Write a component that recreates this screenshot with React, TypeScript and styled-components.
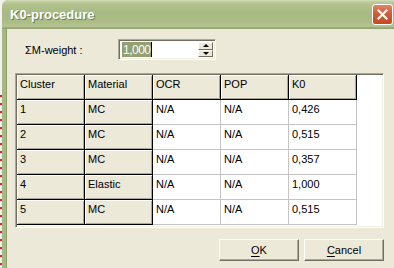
import React from 'react';
import styled, { createGlobalStyle } from 'styled-components';

const Colors = {
  face: '#ECE9D8',
  shadow: '#ACA899',
  darkShadow: '#716F64',
  light: '#F1EFE2',
  white: '#FFFFFF',
  gridLine: '#C4C4C4',
  select: '#93A070',
  frame: '#A7B883',
};

const GlobalStyle = createGlobalStyle`
  html, body {
    margin: 0;
    padding: 0;
    width: 394px;
    height: 268px;
    overflow: hidden;
    background: #EEEEEA;
  }
  * {
    box-sizing: border-box;
  }
`;

const rows = [
  { cluster: '1', material: 'MC', ocr: 'N/A', pop: 'N/A', k0: '0,426' },
  { cluster: '2', material: 'MC', ocr: 'N/A', pop: 'N/A', k0: '0,515' },
  { cluster: '3', material: 'MC', ocr: 'N/A', pop: 'N/A', k0: '0,357' },
  { cluster: '4', material: 'Elastic', ocr: 'N/A', pop: 'N/A', k0: '1,000' },
  { cluster: '5', material: 'MC', ocr: 'N/A', pop: 'N/A', k0: '0,515' },
];

const headers = ['Cluster', 'Material', 'OCR', 'POP', 'K0'];

const App = () => {
  return (
    <>
      <GlobalStyle />
      <Screen>
        <DesktopStrip />
        <Window>
          <TitleBar>
            <Title>K0-procedure</Title>
            <CloseButton>
              <svg width="11" height="11" viewBox="0 0 11 11">
                <path d="M1.5 1.5 L9.5 9.5 M9.5 1.5 L1.5 9.5" stroke="#fff" strokeWidth="2.2" strokeLinecap="square" />
              </svg>
            </CloseButton>
          </TitleBar>
          <Body>
            <WeightRow>
              <Label>ΣM-weight :</Label>
              <SpinEdit>
                <SpinText>
                  <Selected>1,000</Selected>
                  <Caret />
                </SpinText>
                <SpinButtons>
                  <SpinHalf>
                    <Arrow $up />
                  </SpinHalf>
                  <SpinHalf>
                    <Arrow />
                  </SpinHalf>
                </SpinButtons>
              </SpinEdit>
            </WeightRow>

            <GridFrame>
              <Grid>
                {headers.map((h) => (
                  <Cell key={h} $fixed>
                    {h}
                  </Cell>
                ))}
                {rows.map((r) => (
                  <React.Fragment key={r.cluster}>
                    <Cell $fixed>{r.cluster}</Cell>
                    <Cell $fixed>{r.material}</Cell>
                    <Cell>{r.ocr}</Cell>
                    <Cell>{r.pop}</Cell>
                    <Cell>{r.k0}</Cell>
                  </React.Fragment>
                ))}
              </Grid>
            </GridFrame>

            <ButtonRow>
              <DialogButton>
                <u>O</u>K
              </DialogButton>
              <DialogButton>
                <u>C</u>ancel
              </DialogButton>
            </ButtonRow>
          </Body>
        </Window>
      </Screen>
    </>
  );
};

const Screen = styled.div`
  display: flex;
  width: 394px;
  height: 268px;
  overflow: hidden;
  font-family: 'Liberation Sans', Arial, sans-serif;
  font-size: 11px;
  color: #000;
`;

const DesktopStrip = styled.div`
  width: 2px;
  flex-shrink: 0;
  background: repeating-linear-gradient(to bottom, #e02020 0, #e02020 2px, #f4f4f0 2px, #f4f4f0 8px) 0 95px / 2px 100% no-repeat,
    #f2f2ee;
`;

const Window = styled.div`
  flex: 1;
  display: flex;
  flex-direction: column;
  border-left: 4px solid ${Colors.frame};
  box-shadow: inset 1px 0 0 #8E9D6B;
  border-top-left-radius: 7px;
  background: ${Colors.face};
`;

const TitleBar = styled.div`
  height: 29px;
  display: flex;
  align-items: center;
  justify-content: space-between;
  padding: 0 1px 0 4px;
  margin-left: -4px;
  border-top-left-radius: 7px;
  background: linear-gradient(
    to bottom,
    #D6DFBD 0px,
    #BCCA98 2px,
    #AEBF8A 6px,
    #A8BA83 14px,
    #ABBC86 22px,
    #B6C592 26px,
    #98A973 28px,
    #8E9D6B 29px
  );
`;

const Title = styled.div`
  font-family: 'Liberation Sans', Arial, sans-serif;
  font-weight: bold;
  font-size: 13px;
  color: #fff;
  text-shadow: 1px 1px 0 #6E7E4A;
  padding-left: 4px;
`;

const CloseButton = styled.div`
  width: 21px;
  height: 21px;
  display: flex;
  align-items: center;
  justify-content: center;
  border: 1px solid #fff;
  border-radius: 3px;
  background: linear-gradient(to bottom, #E48564 0%, #D35A36 45%, #C44A26 100%);
`;

const Body = styled.div`
  flex: 1;
  display: flex;
  flex-direction: column;
  padding: 10px 10px 0 9px;
`;

const WeightRow = styled.div`
  display: flex;
  align-items: center;
  height: 21px;
`;

const Label = styled.div`
  width: 103px;
  padding-left: 10px;
`;

const SpinEdit = styled.div`
  width: 98px;
  height: 21px;
  display: flex;
  background: #fff;
  border-top: 1px solid ${Colors.shadow};
  border-left: 1px solid ${Colors.shadow};
  border-right: 1px solid ${Colors.white};
  border-bottom: 1px solid ${Colors.white};
  box-shadow: inset 1px 1px 0 ${Colors.darkShadow}, inset -1px -1px 0 ${Colors.light};
  padding: 2px 2px 2px 2px;
`;

const SpinText = styled.div`
  flex: 1;
  display: flex;
  align-items: stretch;
  padding-left: 1px;
`;

const Selected = styled.span`
  display: flex;
  align-items: center;
  background: ${Colors.select};
  color: #fff;
  font-size: 12px;
  letter-spacing: -0.5px;
  padding: 0 1px 0 1px;
`;

const Caret = styled.span`
  width: 1px;
  background: #000;
  margin-left: -1px;
`;

const SpinButtons = styled.div`
  width: 15px;
  display: flex;
  flex-direction: column;
`;

const SpinHalf = styled.div`
  flex: 1;
  display: flex;
  align-items: center;
  justify-content: center;
  background: ${Colors.face};
  border-top: 1px solid ${Colors.white};
  border-left: 1px solid ${Colors.white};
  border-right: 1px solid ${Colors.darkShadow};
  border-bottom: 1px solid ${Colors.darkShadow};
`;

const Arrow = styled.div<{ $up?: boolean }>`
  width: 0;
  height: 0;
  border-left: 3px solid transparent;
  border-right: 3px solid transparent;
  ${(p) => (p.$up ? 'border-bottom: 3px solid #000;' : 'border-top: 3px solid #000;')}
`;

const GridFrame = styled.div`
  margin-top: 13px;
  width: 369px;
  height: 155px;
  background: #fff;
  border-top: 1px solid ${Colors.shadow};
  border-left: 1px solid ${Colors.shadow};
  border-right: 1px solid ${Colors.white};
  border-bottom: 1px solid ${Colors.white};
  box-shadow: inset 1px 1px 0 ${Colors.darkShadow}, inset -1px -1px 0 ${Colors.light};
  padding: 1px;
`;

const Grid = styled.div`
  display: grid;
  grid-template-columns: repeat(5, 68px);
  grid-auto-rows: 25px;
`;

const Cell = styled.div<{ $fixed?: boolean }>`
  padding: 3px 0 0 3px;
  white-space: nowrap;
  overflow: hidden;
  border-right: 1px solid ${(p) => (p.$fixed ? '#000' : Colors.gridLine)};
  border-bottom: 1px solid ${(p) => (p.$fixed ? '#000' : Colors.gridLine)};
  background: ${(p) => (p.$fixed ? Colors.face : '#fff')};
  box-shadow: ${(p) =>
    p.$fixed ? `inset 1px 1px 0 ${Colors.white}, inset -1px -1px 0 ${Colors.shadow}` : 'none'};
`;

const ButtonRow = styled.div`
  display: flex;
  justify-content: flex-end;
  gap: 5px;
  margin-top: 11px;
  width: 369px;
`;

const DialogButton = styled.div`
  width: 80px;
  height: 22px;
  display: flex;
  align-items: center;
  justify-content: center;
  background: ${Colors.face};
  border-top: 1px solid ${Colors.white};
  border-left: 1px solid ${Colors.white};
  border-right: 1px solid ${Colors.darkShadow};
  border-bottom: 1px solid ${Colors.darkShadow};
  box-shadow: inset -1px -1px 0 ${Colors.shadow};

  u {
    text-decoration: underline;
    text-underline-offset: 2px;
  }
`;

export default App;
